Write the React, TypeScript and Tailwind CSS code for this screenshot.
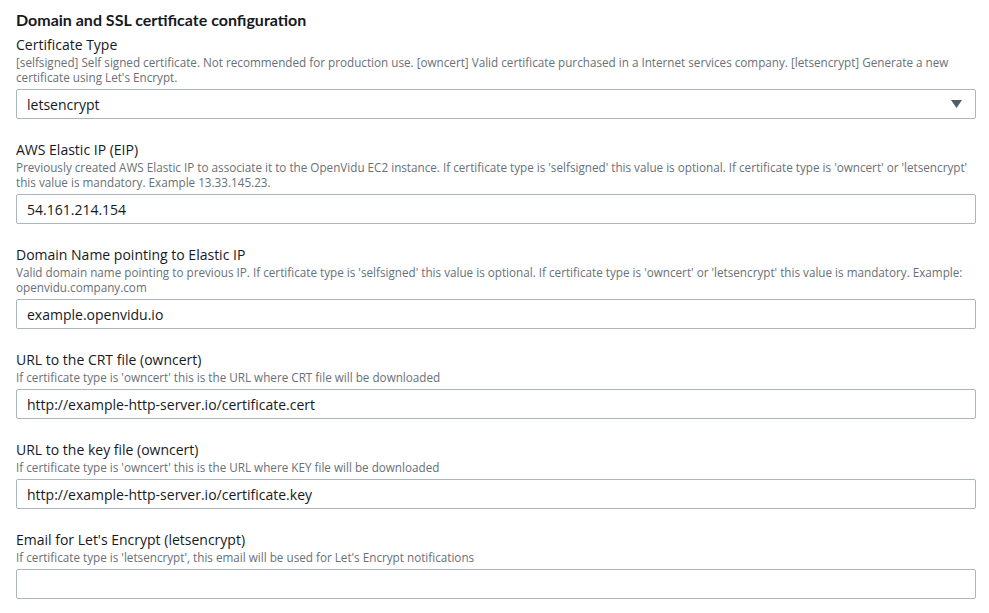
import React from 'react';

type Field = {
  label: string;
  desc: string[];
  value: string;
  select?: boolean;
};

const fields: Field[] = [
  {
    label: 'Certificate Type',
    desc: [
      "[selfsigned] Self signed certificate. Not recommended for production use. [owncert] Valid certificate purchased in a Internet services company. [letsencrypt] Generate a new",
      "certificate using Let's Encrypt.",
    ],
    value: 'letsencrypt',
    select: true,
  },
  {
    label: 'AWS Elastic IP (EIP)',
    desc: [
      "Previously created AWS Elastic IP to associate it to the OpenVidu EC2 instance. If certificate type is 'selfsigned' this value is optional. If certificate type is 'owncert' or 'letsencrypt'",
      'this value is mandatory. Example 13.33.145.23.',
    ],
    value: '54.161.214.154',
  },
  {
    label: 'Domain Name pointing to Elastic IP',
    desc: [
      "Valid domain name pointing to previous IP. If certificate type is 'selfsigned' this value is optional. If certificate type is 'owncert' or 'letsencrypt' this value is mandatory. Example:",
      'openvidu.company.com',
    ],
    value: 'example.openvidu.io',
  },
  {
    label: 'URL to the CRT file (owncert)',
    desc: ["If certificate type is 'owncert' this is the URL where CRT file will be downloaded"],
    value: 'http://example-http-server.io/certificate.cert',
  },
  {
    label: 'URL to the key file (owncert)',
    desc: ["If certificate type is 'owncert' this is the URL where KEY file will be downloaded"],
    value: 'http://example-http-server.io/certificate.key',
  },
  {
    label: "Email for Let's Encrypt (letsencrypt)",
    desc: ["If certificate type is 'letsencrypt', this email will be used for Let's Encrypt notifications"],
    value: '',
  },
];

const FormField = ({ label, desc, value, select }: Field) => {
  return (
    <div className="flex flex-col">
      <label className="text-[14px] leading-5 text-[#16191f]">{label}</label>
      <div className="text-[11.7px] leading-[15px] text-[#687078]">
        {desc.map((line) => (
          <div key={line} className="whitespace-nowrap">
            {line}
          </div>
        ))}
      </div>
      <div className="mt-1 flex h-[30px] items-center rounded-[2px] border border-[#aab7b8] bg-white pl-[10px] pr-3">
        <span className="flex-1 text-[14px] text-[#16191f]">{value}</span>
        {select && (
          <svg width="11" height="8" viewBox="0 0 11 8" className="mr-[1px]">
            <path d="M0 0H11L5.5 8Z" fill="#545b64" />
          </svg>
        )}
      </div>
    </div>
  );
};

export default function App() {
  return (
    <div
      className="min-h-screen bg-white pt-[8px] pl-4"
      style={{ fontFamily: '"Open Sans", "Noto Sans", sans-serif' }}
    >
      <div className="w-[960px]">
        <h2
          className="mb-[3px] text-[16px] leading-6 font-bold text-[#16191f]"
          style={{ fontFamily: 'Lato, "Open Sans", sans-serif' }}
        >
          Domain and SSL certificate configuration
        </h2>
        <div className="flex flex-col gap-[21px]">
          {fields.map((f) => (
            <FormField key={f.label} {...f} />
          ))}
        </div>
      </div>
    </div>
  );
}
